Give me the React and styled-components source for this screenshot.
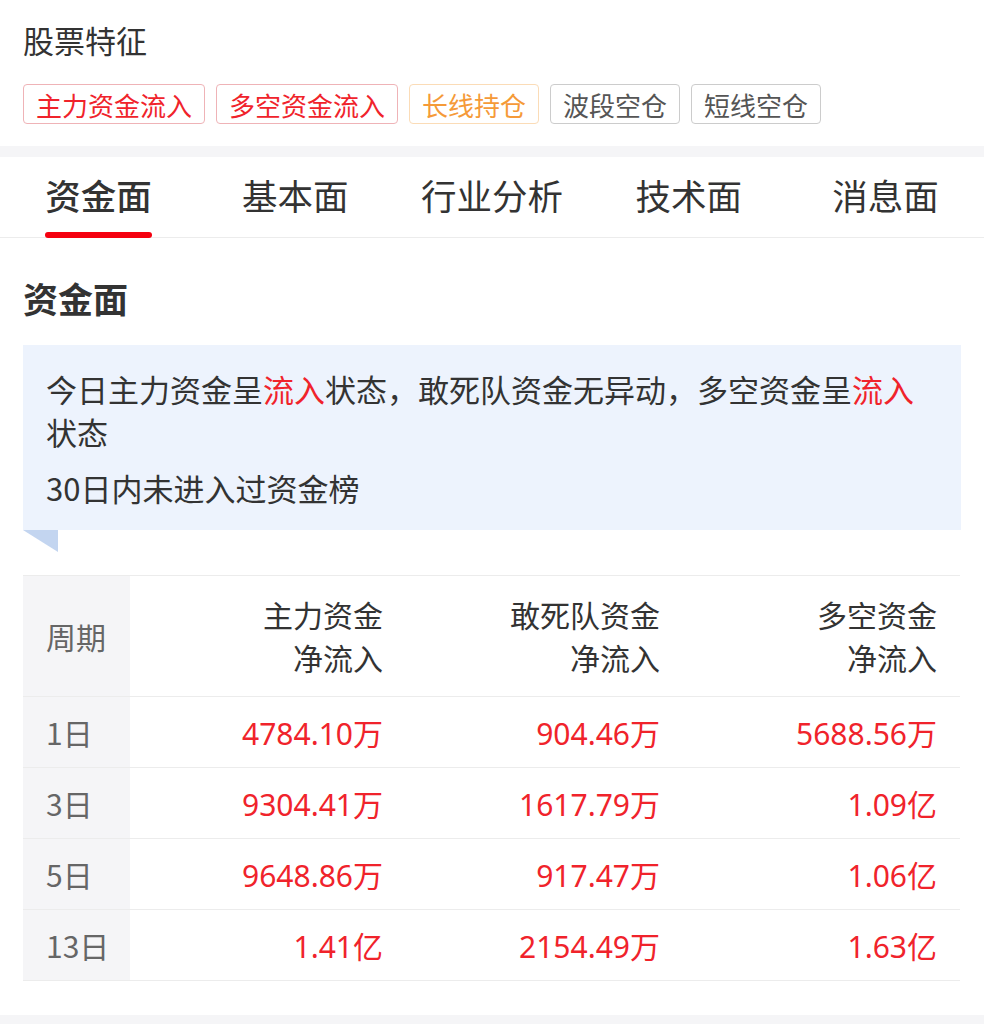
import React, {useState} from "react"
import styled, {createGlobalStyle} from "styled-components"

const GlobalStyle = createGlobalStyle`
  body{
    margin: 0;
    background-color: #ffffff;
    font-family: "Noto Sans CJK SC", "Noto Sans", sans-serif;
    color: #333333;
  }
`

const tags = [
  {text: "主力资金流入", tone: "red"},
  {text: "多空资金流入", tone: "red"},
  {text: "长线持仓", tone: "orange"},
  {text: "波段空仓", tone: "gray"},
  {text: "短线空仓", tone: "gray"},
]

const tabs = ["资金面", "基本面", "行业分析", "技术面", "消息面"]

const rows = [
  {period: "1日", main: "4784.10万", dare: "904.46万", long: "5688.56万"},
  {period: "3日", main: "9304.41万", dare: "1617.79万", long: "1.09亿"},
  {period: "5日", main: "9648.86万", dare: "917.47万", long: "1.06亿"},
  {period: "13日", main: "1.41亿", dare: "2154.49万", long: "1.63亿"},
]

const tones = {
  red: {color: "#f0232b", border: "#efb3b7"},
  orange: {color: "#f59a38", border: "#fbdcb7"},
  gray: {color: "#555555", border: "#cccccc"},
}

const App = ()=>{
  const [active, setActive] = useState(0)

  return(
    <Page>
      <GlobalStyle/>
      <Feature>
        <Title>股票特征</Title>
        <Tags>
          {
            tags.map((t)=>(
              <Tag key={t.text} tone={t.tone}>{t.text}</Tag>
            ))
          }
        </Tags>
      </Feature>
      <Gap/>
      <TabBar>
        {
          tabs.map((t, i)=>(
            <Tab key={t} onClick={()=>setActive(i)}>
              <TabLabel active={i === active}>{t}</TabLabel>
            </Tab>
          ))
        }
      </TabBar>
      <Section>
        <SectionTitle>资金面</SectionTitle>
        <Bubble>
          <p>今日主力资金呈<Red>流入</Red>状态，敢死队资金无异动，多空资金呈<Red>流入</Red>状态</p>
          <p>30日内未进入过资金榜</p>
        </Bubble>
        <Fold/>
        <Table>
          <colgroup>
            <col style={{width: 107}}/>
            <col style={{width: 276}}/>
            <col style={{width: 277}}/>
            <col style={{width: 277}}/>
          </colgroup>
          <thead>
            <tr>
              <Head>周期</Head>
              <HeadCell>主力资金<br/>净流入</HeadCell>
              <HeadCell>敢死队资金<br/>净流入</HeadCell>
              <HeadCell>多空资金<br/>净流入</HeadCell>
            </tr>
          </thead>
          <tbody>
            {
              rows.map((r)=>(
                <tr key={r.period}>
                  <Head>{r.period}</Head>
                  <Value>{r.main}</Value>
                  <Value>{r.dare}</Value>
                  <Value>{r.long}</Value>
                </tr>
              ))
            }
          </tbody>
        </Table>
      </Section>
      <Gap/>
    </Page>
  )
}
export default App

const Page = styled.div`
  width: 984px;
  min-height: 1024px;
  display: flex;
  flex-direction: column;
`
const Feature = styled.div`
  padding: 22px 23px 22px;
`
const Title = styled.div`
  font-size: 31px;
  line-height: 36px;
  color: #333333;
`
const Tags = styled.div`
  display: flex;
  gap: 11px;
  margin-top: 26px;
`
const Tag = styled.div`
  height: 40px;
  box-sizing: border-box;
  display: flex;
  align-items: center;
  padding: 0 12px;
  font-size: 26px;
  border-radius: 4px;
  color: ${(p)=>tones[p.tone].color};
  border: 1px solid ${(p)=>tones[p.tone].border};
`
const Gap = styled.div`
  height: 11px;
  background-color: #f5f5f7;
`
const TabBar = styled.div`
  display: flex;
  height: 80px;
  border-bottom: 1px solid #ececec;
`
const Tab = styled.div`
  flex: 1;
  display: flex;
  justify-content: center;
  cursor: pointer;
`
const TabLabel = styled.div`
  position: relative;
  font-size: 35.5px;
  line-height: 76px;
  color: #333333;
  font-weight: ${(p)=>p.active ? 500 : 400};

  &::after{
    content: "";
    display: ${(p)=>p.active ? "block" : "none"};
    position: absolute;
    left: 0;
    right: 0;
    bottom: -1px;
    height: 6px;
    border-radius: 3px;
    background-color: #f5000f;
  }
`
const Section = styled.div`
  padding: 39px 23px 34px;
`
const SectionTitle = styled.div`
  font-size: 35px;
  line-height: 42px;
  font-weight: 700;
  color: #333333;
`
const Bubble = styled.div`
  margin-top: 26px;
  background-color: #edf3fd;
  padding: 22px 23px 21px;
  font-size: 31px;
  line-height: 43px;
  color: #333333;

  p{
    margin: 0;
  }
  p + p{
    margin-top: 13px;
  }
`
const Red = styled.span`
  color: #f0232b;
`
const Fold = styled.div`
  width: 0;
  height: 0;
  border-top: 22px solid #c3d5f0;
  border-left: 35px solid transparent;
  margin-bottom: 23px;
`
const Table = styled.table`
  width: 937px;
  table-layout: fixed;
  border-collapse: collapse;
  font-size: 30px;
  border-top: 1px solid #ececec;

  tr{
    border-bottom: 1px solid #ececec;
  }
`
const Head = styled.th`
  padding: 0 0 0 23px;
  text-align: left;
  font-weight: 400;
  color: #666666;
  background-color: #f5f5f7;
  height: 70px;
`
const HeadCell = styled.th`
  padding: 17px 23px 17px 0;
  text-align: right;
  font-weight: 400;
  line-height: 43px;
  color: #333333;
`
const Value = styled.td`
  height: 70px;
  padding: 0 23px 0 0;
  text-align: right;
  color: #f0232b;
  font-family: "Noto Sans", "Noto Sans CJK SC", sans-serif;
`
